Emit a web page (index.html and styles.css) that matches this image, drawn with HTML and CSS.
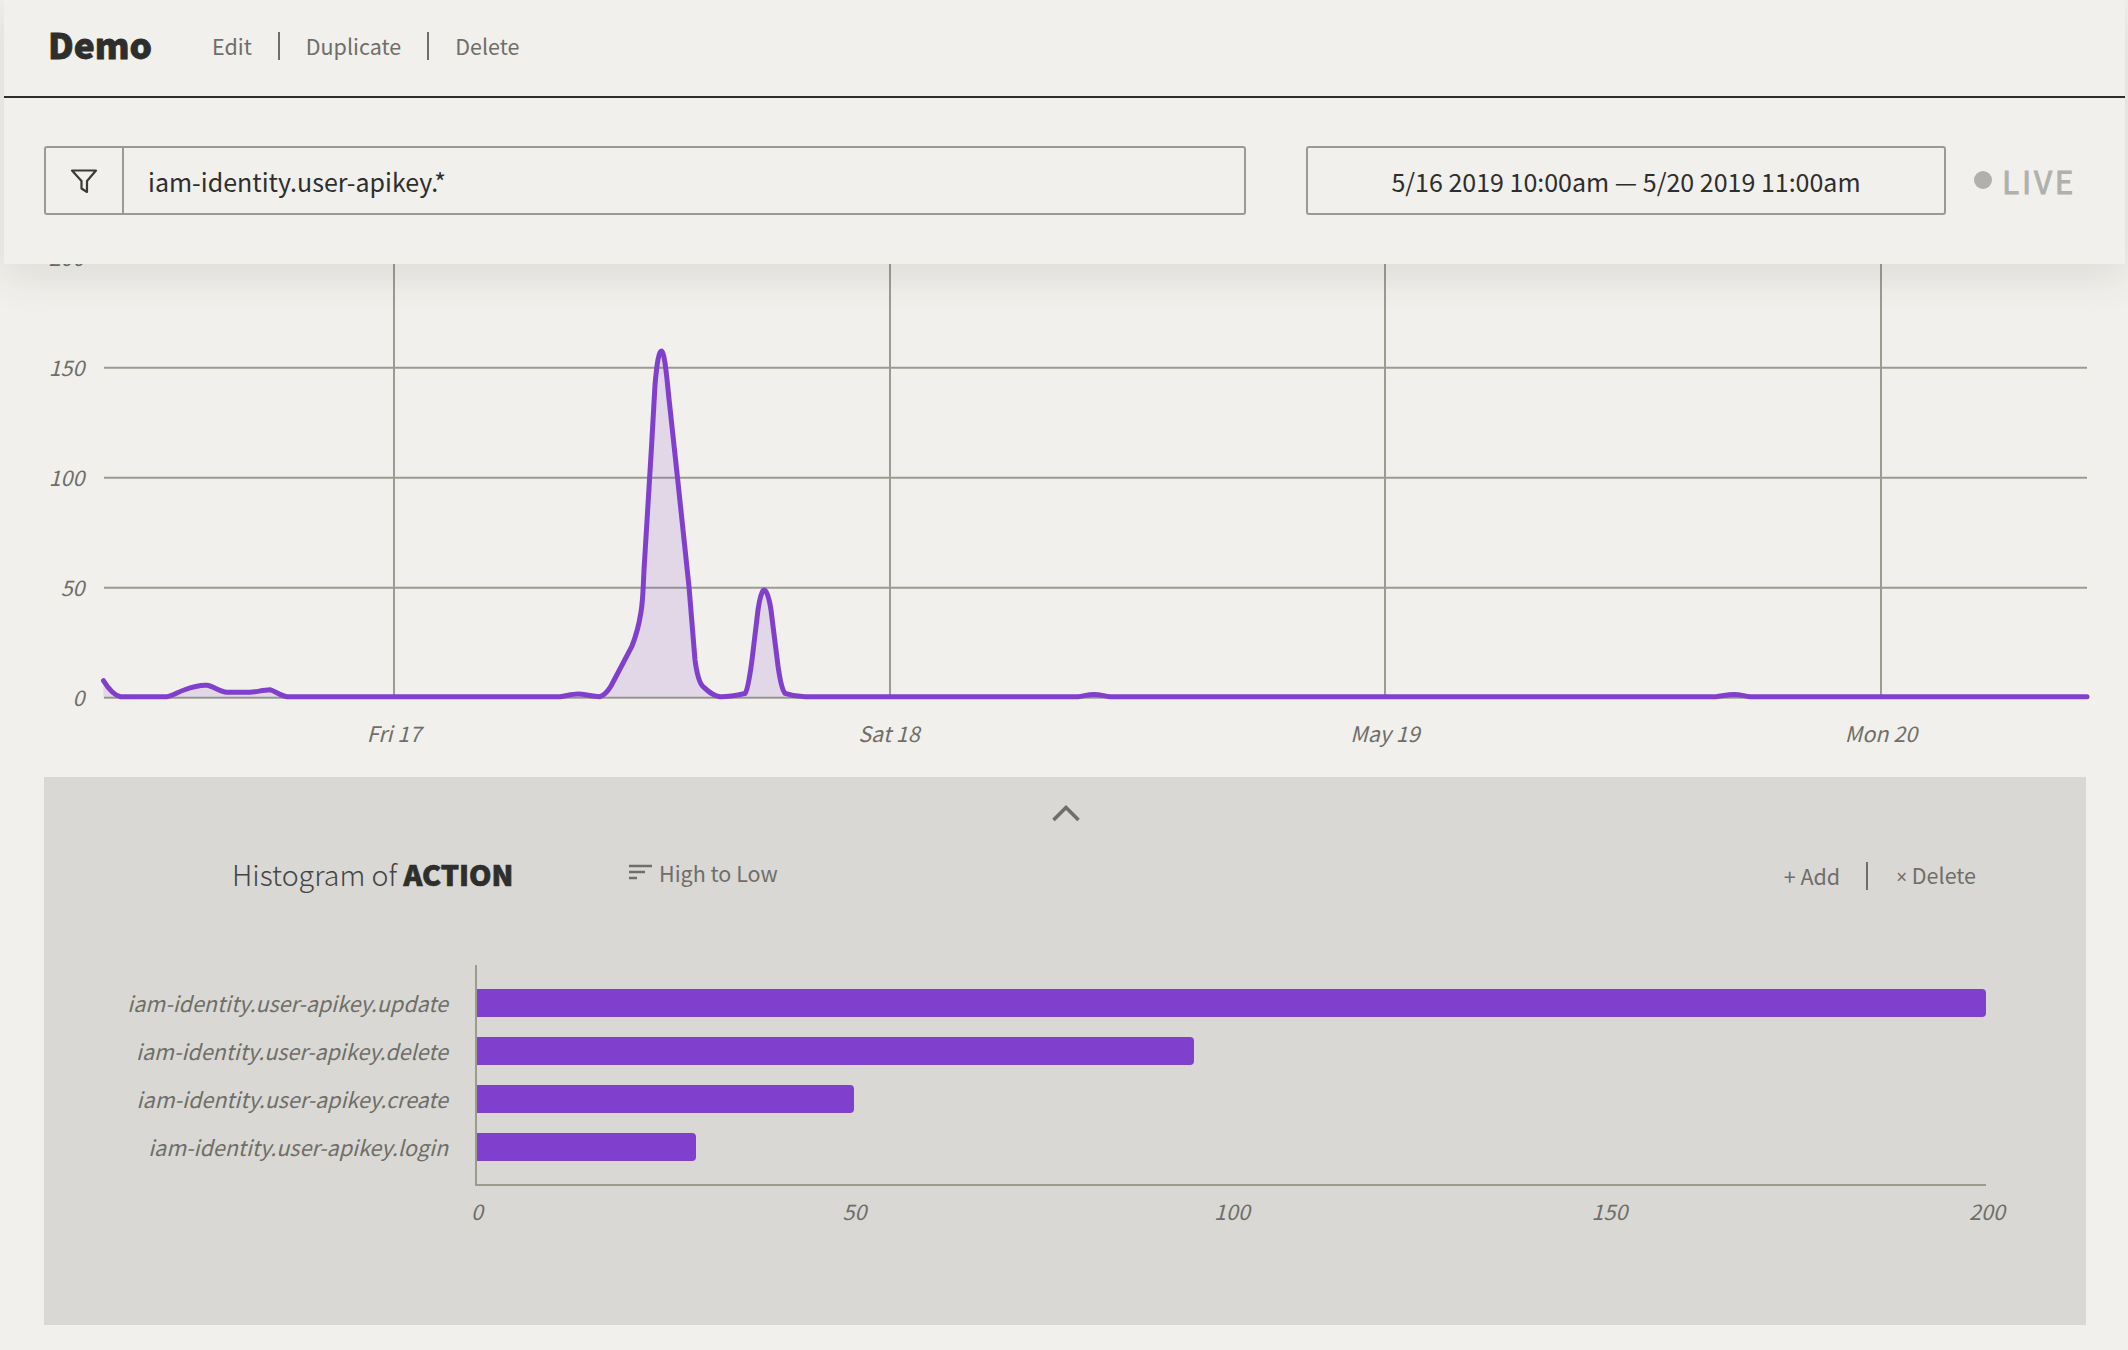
FILE: index.html
```html
<!DOCTYPE html>
<html lang="en">
<head>
  <meta charset="UTF-8">
  <title>Demo</title>
  <link rel="stylesheet" href="styles.css">
</head>
<body>

  <header class="top">
    <div class="titlebar">
      <h1 class="title">Demo</h1>
      <nav class="links">
        <a>Edit</a>
        <a>Duplicate</a>
        <a>Delete</a>
      </nav>
    </div>
    <div class="searchbar">
      <div class="filter">
        <span class="filter-icon">
          <svg width="28" height="26" viewBox="0 0 28 26"><path d="M2 2.5H26L17 13V24L11.5 20.5V13Z" fill="none" stroke="#3a3a38" stroke-width="2.2" stroke-linejoin="round"/></svg>
        </span>
        <span class="filter-text">iam-identity.user-apikey.*</span>
      </div>
      <div class="daterange">5/16 2019 10:00am — 5/20 2019 11:00am</div>
      <div class="live"><span class="live-dot"></span>LIVE</div>
    </div>
  </header>

  <!-- timeline, the top of it slides under the header -->
  <svg class="timeline" width="2128" height="520" viewBox="0 240 2128 520">
    <g class="grid">
      <line x1="104" y1="257.7" x2="2087" y2="257.7"/>
      <line x1="104" y1="367.7" x2="2087" y2="367.7"/>
      <line x1="104" y1="477.7" x2="2087" y2="477.7"/>
      <line x1="104" y1="587.7" x2="2087" y2="587.7"/>
      <line x1="104" y1="697.7" x2="2087" y2="697.7"/>
      <line x1="394" y1="240" x2="394" y2="698"/>
      <line x1="890" y1="240" x2="890" y2="698"/>
      <line x1="1385" y1="240" x2="1385" y2="698"/>
      <line x1="1881" y1="240" x2="1881" y2="698"/>
    </g>
    <path class="area" d="M103.5 680.7 C108 688 113 695 120.5 696.7 L166.5 696.7 C172 696 178 692 184 690 C192 687 200 685 207 685.3 C213 686 220 692 227 692.3 L250 692.3 C256 692 263 690 270 689.7 C275 691 281 696 287 696.7 L560 696.7 C566 696 572 694 578 694 C585 694 592 696.7 600 696.7 C605 695 608 691 611 686 L631.7 646.7 C636 636 639 625 641 612 C643 600 643 590 644 570 L651.5 447 L655 385 C657 362 659 351 661.3 351 C664 351 666 368 668.8 397 L677.4 476.7 L689 586.7 L695 660 C697 675 699 682 702.5 686 C708 691 713 696 720 696.7 C728 697 738 695 745 693.5 C748 690 750 675 752 660 L758 610 C760 597 762 590 764.3 590 C766.5 590 769 597 771 610 L778 666 C780 680 782 690 785 693.3 C790 695 798 696.7 805 696.7 L1078 696.7 C1084 696 1088 694.5 1094 694.5 C1100 694.5 1104 696 1110 696.7 L1716 696.7 C1722 696 1728 694.5 1734 694.5 C1740 694.5 1744 696 1750 696.7 L2087 696.7 L2087 697.7 L103.5 697.7 Z"/>
    <path class="curve" d="M103.5 680.7 C108 688 113 695 120.5 696.7 L166.5 696.7 C172 696 178 692 184 690 C192 687 200 685 207 685.3 C213 686 220 692 227 692.3 L250 692.3 C256 692 263 690 270 689.7 C275 691 281 696 287 696.7 L560 696.7 C566 696 572 694 578 694 C585 694 592 696.7 600 696.7 C605 695 608 691 611 686 L631.7 646.7 C636 636 639 625 641 612 C643 600 643 590 644 570 L651.5 447 L655 385 C657 362 659 351 661.3 351 C664 351 666 368 668.8 397 L677.4 476.7 L689 586.7 L695 660 C697 675 699 682 702.5 686 C708 691 713 696 720 696.7 C728 697 738 695 745 693.5 C748 690 750 675 752 660 L758 610 C760 597 762 590 764.3 590 C766.5 590 769 597 771 610 L778 666 C780 680 782 690 785 693.3 C790 695 798 696.7 805 696.7 L1078 696.7 C1084 696 1088 694.5 1094 694.5 C1100 694.5 1104 696 1110 696.7 L1716 696.7 C1722 696 1728 694.5 1734 694.5 C1740 694.5 1744 696 1750 696.7 L2087 696.7"/>
    <g class="ylabels">
      <text x="84.5" y="266">200</text>
      <text x="84.5" y="376">150</text>
      <text x="84.5" y="486">100</text>
      <text x="84.5" y="596">50</text>
      <text x="84.5" y="706">0</text>
    </g>
    <g class="xlabels">
      <text x="394" y="742">Fri 17</text>
      <text x="889" y="742">Sat 18</text>
      <text x="1385" y="742">May 19</text>
      <text x="1881" y="742">Mon 20</text>
    </g>
  </svg>

  <section class="panel">
    <div class="collapse">
      <svg width="30" height="18" viewBox="0 0 30 18"><path d="M2.5 16L15 3.5L27.5 16" fill="none" stroke="#6f6e6a" stroke-width="3.6"/></svg>
    </div>

    <div class="hist-head">
      <h2 class="hist-title">Histogram of <b>ACTION</b></h2>
      <div class="sort">
        <svg width="24" height="16" viewBox="0 0 24 16"><path d="M1 2H24M1 8H17M1 14H9" fill="none" stroke="#6f6e6a" stroke-width="2.4"/></svg>
        High to Low
      </div>
      <div class="hist-actions">
        <a>+ Add</a>
        <a><span class="times">×</span> Delete</a>
      </div>
    </div>

    <div class="hist">
      <div class="hist-labels">
        <div class="hist-label">iam-identity.user-apikey.update</div>
        <div class="hist-label">iam-identity.user-apikey.delete</div>
        <div class="hist-label">iam-identity.user-apikey.create</div>
        <div class="hist-label">iam-identity.user-apikey.login</div>
      </div>
      <div class="hist-plot">
        <div class="bar" style="width: 100%"></div>
        <div class="bar" style="width: 47.5%"></div>
        <div class="bar" style="width: 25%"></div>
        <div class="bar" style="width: 14.5%"></div>
      </div>
    </div>
    <div class="hist-ticks">
      <span>0</span>
      <span>50</span>
      <span>100</span>
      <span>150</span>
      <span>200</span>
    </div>
  </section>

</body>
</html>
```
FILE: styles.css
```css
body {
  font-family: "Noto Sans CJK SC", "Noto Sans", sans-serif;
  margin: 0;
  background-color: #f1f0ec;
  color: #2e2e2c;
  overflow: hidden;
}

/* header */
.top {
  position: relative;
  z-index: 2;
  height: 264px;
  margin: 0 3px 0 4px;
  background-color: #f1f0ec;
  box-shadow: 0 10px 40px rgba(60, 60, 50, 0.12);
}

.titlebar {
  display: flex;
  align-items: center;
  box-sizing: border-box;
  height: 98px;
  padding: 0 0 4px 44px;
  border-bottom: 2px solid #2e2e2c;
}

.title {
  box-sizing: border-box;
  width: 164px;
  margin: 0;
  padding-bottom: 6px;
  font-size: 35.3px;
  font-weight: 900;
  -webkit-text-stroke: 0.8px #2e2e2c;
}

.links {
  display: flex;
  align-items: center;
  font-size: 21.5px;
  color: #6f6e6a;
}

.links a {
  line-height: 28px;
  padding: 0 26px;
  border-left: 2px solid #6f6e6a;
}

.links a:first-child {
  padding-left: 0;
  border-left: none;
}

.searchbar {
  display: flex;
  align-items: center;
  padding: 48px 0 0 40px;
}

.filter {
  display: flex;
  align-items: stretch;
  box-sizing: border-box;
  width: 1202px;
  height: 69px;
  border: 2px solid #9a9995;
  border-radius: 3px;
}

.filter-icon {
  display: flex;
  align-items: center;
  justify-content: center;
  width: 76px;
  border-right: 2px solid #9a9995;
}

.filter-text {
  align-self: center;
  padding-left: 24px;
  font-size: 25px;
}

.daterange {
  box-sizing: border-box;
  width: 640px;
  height: 69px;
  margin-left: 60px;
  border: 2px solid #9a9995;
  border-radius: 3px;
  font-size: 25px;
  line-height: 66px;
  text-align: center;
}

.live {
  display: flex;
  align-items: center;
  margin: 0 0 2px 28px;
  font-size: 31.5px;
  letter-spacing: 2.8px;
  -webkit-text-stroke: 0.9px #b0b0ac;
  color: #b0b0ac;
}

.live-dot {
  width: 18px;
  height: 18px;
  margin-right: 10px;
  border-radius: 50%;
  background-color: #b0b0ac;
}

/* timeline */
.timeline {
  display: block;
  margin-top: -24px;
}

.grid line {
  stroke: #9c9b90;
  stroke-width: 2;
}

.area {
  fill: rgba(127, 63, 207, 0.14);
}

.curve {
  fill: none;
  stroke: #803fcd;
  stroke-width: 5;
  stroke-linejoin: round;
  stroke-linecap: round;
}

.ylabels text,
.xlabels text {
  font-size: 21.5px;
  font-style: italic;
  fill: #6f6e68;
}

.ylabels text {
  text-anchor: end;
}

.xlabels text {
  text-anchor: middle;
}

/* histogram */
.panel {
  box-sizing: border-box;
  height: 548px;
  margin: 17px 42px 0 44px;
  background-color: #d9d8d4;
}

.collapse {
  display: flex;
  justify-content: center;
  box-sizing: border-box;
  height: 56px;
  padding: 27px 0 0 2px;
}

.hist-head {
  display: flex;
  align-items: center;
  height: 80px;
  padding: 0 110px 0 188px;
}

.hist-title {
  width: 396px;
  margin: 0;
  font-size: 28.6px;
  font-weight: 300;
  color: #454543;
  white-space: nowrap;
}

.hist-title b {
  font-weight: 900;
  color: #2e2e2c;
  -webkit-text-stroke: 0.7px #2e2e2c;
}

.sort {
  display: flex;
  align-items: center;
  gap: 7px;
  padding-bottom: 2px;
  font-size: 21.5px;
  color: #6f6e6a;
}

.hist-actions {
  display: flex;
  align-items: center;
  margin-left: auto;
  padding-top: 6px;
  font-size: 21.5px;
  color: #6f6e6a;
}

.hist-actions a {
  line-height: 28px;
  padding-left: 28px;
}

.hist-actions a:first-child {
  padding: 0 26px 0 0;
  border-right: 2px solid #6f6e6a;
}

.times {
  font-family: "Noto Sans", sans-serif;
  font-size: 19px;
}

.hist {
  display: flex;
  margin-top: 52px;
}

.hist-labels {
  box-sizing: border-box;
  width: 404px;
  padding-top: 24px;
}

.hist-label {
  height: 48px;
  line-height: 28px;
  font-size: 21.5px;
  font-style: italic;
  text-align: right;
  color: #6f6e68;
}

.hist-plot {
  display: flex;
  flex-direction: column;
  gap: 20px;
  box-sizing: border-box;
  width: 1511px;
  margin-left: 27px;
  padding: 24px 0 23px;
  border-left: 2px solid #9c9b90;
  border-bottom: 2px solid #9c9b90;
}

.bar {
  height: 28px;
  background-color: #803fcd;
  border-radius: 0 4px 4px 0;
}

.hist-ticks {
  display: flex;
  justify-content: space-between;
  width: 1570px;
  margin: 9px 0 0 403px;
  font-size: 21.5px;
  font-style: italic;
  color: #6f6e68;
}

.hist-ticks span {
  width: 60px;
  text-align: center;
}
```
